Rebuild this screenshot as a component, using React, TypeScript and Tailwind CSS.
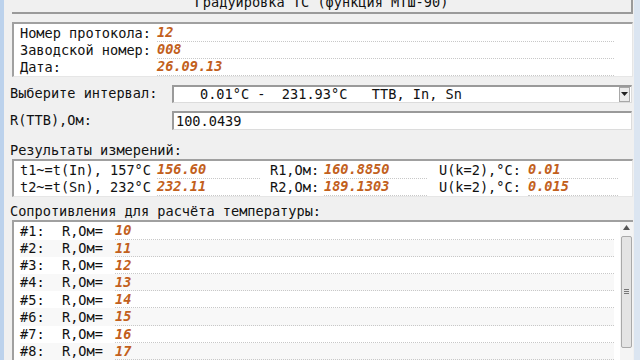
import React from "react";

const mono = { fontFamily: '"DejaVu Sans Mono", "Liberation Mono", monospace' };

const V = ({ children }: { children: React.ReactNode }) => (
  <span className="font-bold italic text-[#c2601c]">{children}</span>
);

const Dotted = ({ className, children }: { className: string; children?: React.ReactNode }) => (
  <div className={"h-full flex items-center border-b border-dotted border-[#c8c8c8] " + className}>{children}</div>
);

export default function App() {
  const list = [10, 11, 12, 13, 14, 15, 16, 17];
  return (
    <div className="w-[640px] h-[360px] overflow-hidden bg-[#f0f0f0] flex text-[13.6px] text-[#111]" style={mono}>
      <div className="w-[4px] h-full bg-[#bcd2ec]" />
      <div className="flex-1 flex flex-col">
        {/* title */}
        <div className="ml-[8px] mr-[1px] h-[14px] overflow-hidden border-b-2 border-r-2 border-[#9a9a9a] flex justify-center">
          <div className="leading-[16px] mt-[-6px] whitespace-pre">Градуировка ТС (функция МТШ-90)</div>
        </div>
        {/* header box */}
        <div className="mt-[8px] ml-[8px] mr-[1px] h-[56px] bg-white border-t-2 border-l-2 border-[#a0a0a0] border-r border-b border-r-[#e6e6e6] border-b-[#e6e6e6] pt-[1px] pl-[6px] pr-[18px]">
          {[
            ["Номер протокола:", "12"],
            ["Заводской номер:", "008"],
            ["Дата:", "26.09.13"],
          ].map(([l, v], i) => (
            <div key={i} className="h-[17px] flex items-center">
              <div className="w-[137px] whitespace-pre leading-[17px]">{l}</div>
              <Dotted className="flex-1">
                <V>{v}</V>
              </Dotted>
            </div>
          ))}
        </div>
        {/* select */}
        <div className="mt-[8px] flex items-center h-[18px]">
          <div className="w-[168px] pl-[6px] whitespace-pre">Выберите интервал:</div>
          <div className="flex-1 mr-[2px] h-[18px] bg-white border-t-2 border-l-2 border-[#9a9a9a] border-b border-r border-b-[#dcdcdc] border-r-[#dcdcdc] flex items-center">
            <div className="flex-1 whitespace-pre pl-[26px] leading-[16px]">0.01°C -  231.93°C   TTB, In, Sn</div>
            <div className="w-[11px] h-[15px] mr-[1px] bg-[#ececec] border border-[#a8a8a8] flex items-center justify-center">
              <svg width="7" height="4" viewBox="0 0 7 4"><path d="M0 0h7L3.5 4z" fill="#222" /></svg>
            </div>
          </div>
        </div>
        {/* input */}
        <div className="mt-[8px] flex items-center h-[19px]">
          <div className="w-[168px] pl-[6px] whitespace-pre">R(TTB),Ом:</div>
          <div className="flex-1 mr-[2px] h-[19px] bg-white border-t-2 border-l-2 border-[#9a9a9a] border-b border-r border-b-[#dcdcdc] border-r-[#dcdcdc] flex items-center pl-[2px] leading-[16px]">
            100.0439
          </div>
        </div>
        {/* results label */}
        <div className="mt-[11px] pl-[6px] h-[18px] leading-[18px] whitespace-pre">Результаты измерений:</div>
        <div className="ml-[8px] mr-[1px] h-[39px] bg-white border-t-2 border-l-2 border-[#a0a0a0] border-r border-b border-r-[#e6e6e6] border-b-[#e6e6e6] pt-[1px] pl-[6px]">
          {[
            ["t1~=t(In), 157°C", "156.60", "R1,Ом:", "160.8850", "U(k=2),°C:", "0.01"],
            ["t2~=t(Sn), 232°C", "232.11", "R2,Ом:", "189.1303", "U(k=2),°C:", "0.015"],
          ].map((r, i) => (
            <div key={i} className="h-[17px] flex items-center">
              <div className="w-[137px] whitespace-pre">{r[0]}</div>
              <Dotted className="w-[103px]"><V>{r[1]}</V></Dotted>
              <div className="w-[10px]" />
              <div className="w-[54px] whitespace-pre">{r[2]}</div>
              <Dotted className="w-[103px]"><V>{r[3]}</V></Dotted>
              <div className="w-[12px]" />
              <div className="w-[89px] whitespace-pre">{r[4]}</div>
              <Dotted className="w-[90px]"><V>{r[5]}</V></Dotted>
            </div>
          ))}
        </div>
        {/* list label */}
        <div className="mt-[5px] pl-[6px] h-[18px] leading-[18px] whitespace-pre">Сопротивления для расчёта температуры:</div>
        <div className="ml-[8px] mr-[1px] flex-1 bg-white border-t-2 border-l-2 border-[#a0a0a0] flex">
          <div className="flex-1 pt-[1px] pl-[6px] pr-[6px]">
            {list.map((v, i) => (
              <div key={i} className={"h-[17.2px] flex items-center " + (i % 2 === 1 ? "bg-[#f8f8f8]" : "")}>
                <div className="w-[42px] whitespace-pre">#{i + 1}:</div>
                <div className="w-[53px] whitespace-pre">R,Ом=</div>
                <Dotted className="flex-1"><V>{v}</V></Dotted>
              </div>
            ))}
          </div>
          <div className="w-[13px] flex flex-col items-center pt-[3px] bg-[#f4f4f4]">
            <svg width="7" height="5" viewBox="0 0 7 5"><path d="M0 5h7L3.5 0z" fill="#555" /></svg>
            <div className="mt-[6px] w-[11px] h-[112px] rounded-[2px] border border-[#a9a9a9] bg-[#e4e4e4] flex items-center justify-center">
              <div className="flex flex-col gap-[1px]">
                <div className="w-[5px] h-[1px] bg-[#777]" />
                <div className="w-[5px] h-[1px] bg-[#777]" />
                <div className="w-[5px] h-[1px] bg-[#777]" />
              </div>
            </div>
          </div>
        </div>
      </div>
      <div className="w-[6px] h-full bg-[#dbe5f1]" />
    </div>
  );
}
